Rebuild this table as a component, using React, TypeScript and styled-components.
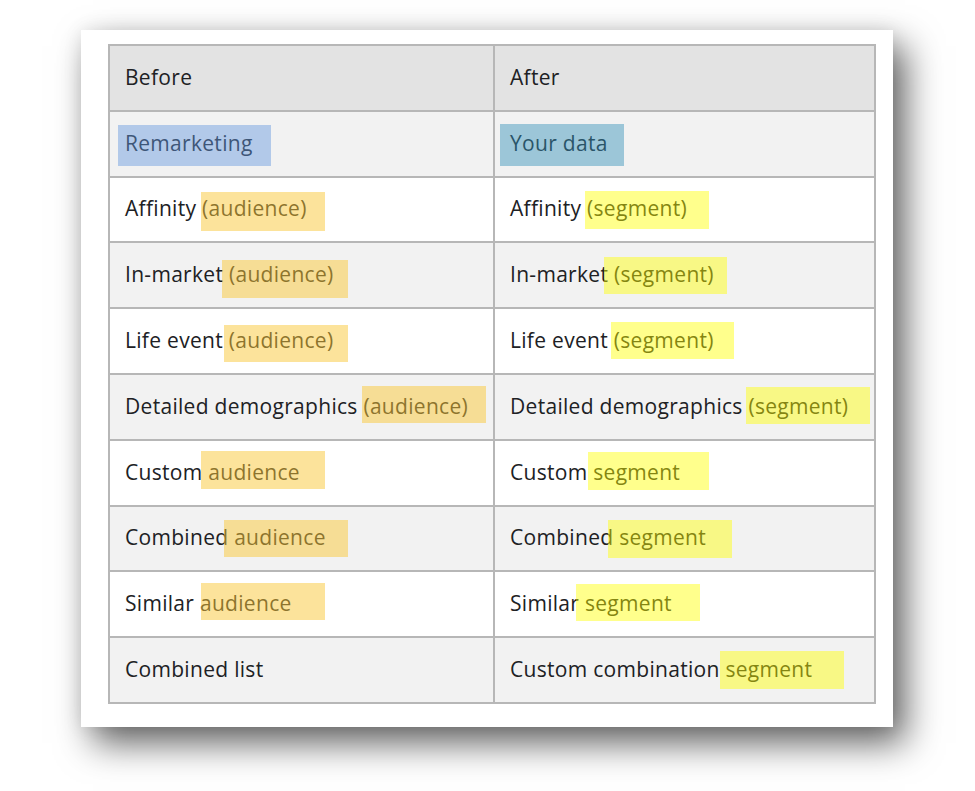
import React from "react";
import styled, { createGlobalStyle } from "styled-components";

const Global = createGlobalStyle`
  html, body { margin: 0; padding: 0; background: #ffffff; }
  body { font-family: "Open Sans", "Noto Sans", Arial, sans-serif; }
`;

const Page = styled.div`
  padding: 30px 0 0 81px;
  width: 975px;
  height: 791px;
  box-sizing: border-box;
  overflow: hidden;
`;

const Card = styled.div`
  width: 812px;
  height: 697px;
  box-sizing: border-box;
  padding: 14px 19px 25px 27px;
  background: #ffffff;
  box-shadow: 12px 16px 34px rgba(0, 0, 0, 0.62), 0 0 18px rgba(0, 0, 0, 0.08);
`;

const Table = styled.table`
  width: 766px;
  border-collapse: collapse;
  border: 2px solid #b7b7b7;
  table-layout: fixed;
`;

const Row = styled.tr<{ $shade: "head" | "gray" | "white" }>`
  height: 65.8px;
  background: ${(p) =>
    p.$shade === "head" ? "#e3e3e3" : p.$shade === "gray" ? "#f2f2f2" : "#ffffff"};
`;

const Cell = styled.td<{ $w: number }>`
  position: relative;
  box-sizing: border-box;
  width: ${(p) => p.$w}px;
  border: 2px solid #b7b7b7;
  padding: 0 0 2px 15px;
  font-size: 21px;
  letter-spacing: 0.3px;
  line-height: 24px;
  color: #202124;
  vertical-align: middle;
  white-space: nowrap;
`;

const tones = {
  blue: "rgba(100, 150, 222, 0.45)",
  teal: "rgba(55, 145, 185, 0.46)",
  orange: "rgba(250, 200, 55, 0.5)",
  yellow: "rgba(255, 255, 0, 0.45)",
};

const Mark = styled.span<{ $tone: keyof typeof tones }>`
  position: absolute;
  background: ${(p) => tones[p.$tone]};
  pointer-events: none;
`;

type M = { x: number; y: number; w: number; h: number; tone: keyof typeof tones };
type R = { before: string; after: string; bm?: M; am?: M };

const rows: R[] = [
  {
    before: "Remarketing",
    after: "Your data",
    bm: { x: 8, y: 13, w: 153, h: 41, tone: "blue" },
    am: { x: 5, y: 12, w: 124, h: 42, tone: "teal" },
  },
  {
    before: "Affinity (audience)",
    after: "Affinity (segment)",
    bm: { x: 91, y: 14, w: 124, h: 39, tone: "orange" },
    am: { x: 90, y: 13, w: 124, h: 38, tone: "yellow" },
  },
  {
    before: "In-market (audience)",
    after: "In-market (segment)",
    bm: { x: 112, y: 17, w: 126, h: 38, tone: "orange" },
    am: { x: 109, y: 14, w: 123, h: 37, tone: "yellow" },
  },
  {
    before: "Life event (audience)",
    after: "Life event (segment)",
    bm: { x: 114, y: 16, w: 124, h: 37, tone: "orange" },
    am: { x: 116, y: 13, w: 123, h: 37, tone: "yellow" },
  },
  {
    before: "Detailed demographics (audience)",
    after: "Detailed demographics (segment)",
    bm: { x: 252, y: 11, w: 124, h: 37, tone: "orange" },
    am: { x: 251, y: 12, w: 124, h: 37, tone: "yellow" },
  },
  {
    before: "Custom audience",
    after: "Custom segment",
    bm: { x: 91, y: 10, w: 124, h: 38, tone: "orange" },
    am: { x: 93, y: 11, w: 121, h: 38, tone: "yellow" },
  },
  {
    before: "Combined audience",
    after: "Combined segment",
    bm: { x: 114, y: 13, w: 124, h: 37, tone: "orange" },
    am: { x: 113, y: 13, w: 124, h: 38, tone: "yellow" },
  },
  {
    before: "Similar audience",
    after: "Similar segment",
    bm: { x: 91, y: 11, w: 124, h: 37, tone: "orange" },
    am: { x: 81, y: 12, w: 124, h: 37, tone: "yellow" },
  },
  {
    before: "Combined list",
    after: "Custom combination segment",
    am: { x: 225, y: 13, w: 124, h: 38, tone: "yellow" },
  },
];

const Highlight = ({ m }: { m?: M }) =>
  m ? (
    <Mark
      $tone={m.tone}
      style={{ left: m.x, top: m.y, width: m.w, height: m.h }}
    />
  ) : null;

export default function App() {
  return (
    <>
      <Global />
      <Page>
        <Card>
          <Table>
            <colgroup>
              <col style={{ width: 385 }} />
              <col style={{ width: 381 }} />
            </colgroup>
            <tbody>
              <Row $shade="head">
                <Cell $w={385}>Before</Cell>
                <Cell $w={381}>After</Cell>
              </Row>
              {rows.map((r, i) => (
                <Row key={r.before} $shade={i % 2 === 0 ? "gray" : "white"}>
                  <Cell $w={385}>
                    {r.before}
                    <Highlight m={r.bm} />
                  </Cell>
                  <Cell $w={381}>
                    {r.after}
                    <Highlight m={r.am} />
                  </Cell>
                </Row>
              ))}
            </tbody>
          </Table>
        </Card>
      </Page>
    </>
  );
}
